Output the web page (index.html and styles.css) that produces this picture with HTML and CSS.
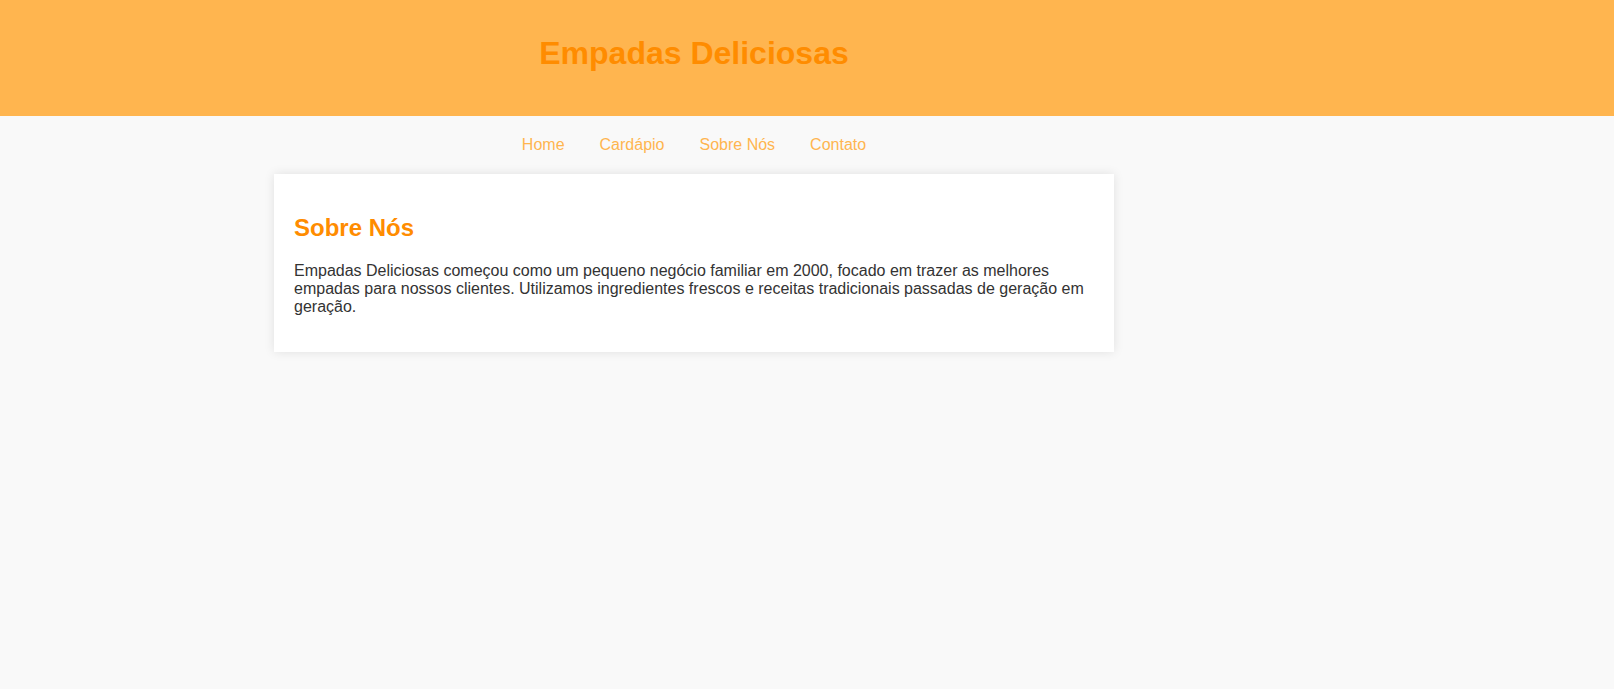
FILE: index.html
```html
<!DOCTYPE html>
<html lang="pt-BR">
<head>
<meta charset="utf-8">
<title>Empadas Deliciosas</title>
<link rel="stylesheet" href="styles.css">
</head>
<body>
<header class="site-header">
  <div class="container">
    <h1 class="site-title">Empadas Deliciosas</h1>
  </div>
</header>
<nav class="site-nav">
  <div class="container nav-links">
    <a href="#">Home</a>
    <a href="#">Cardápio</a>
    <a href="#">Sobre Nós</a>
    <a href="#">Contato</a>
  </div>
</nav>
<main class="container">
  <section class="card">
    <h2 class="card-title">Sobre Nós</h2>
    <p class="card-text">Empadas Deliciosas começou como um pequeno negócio familiar em 2000, focado em trazer as melhores empadas para nossos clientes. Utilizamos ingredientes frescos e receitas tradicionais passadas de geração em geração.</p>
  </section>
</main>
</body>
</html>
```
FILE: styles.css
```css
html, body {
  margin: 0;
  padding: 0;
}
body {
  background: #f9f9f9;
  font-family: "Liberation Sans", Arial, sans-serif;
  color: #333;
  min-height: 689px;
}
.container {
  width: 840px;
  margin-left: 274px;
  box-sizing: border-box;
}
.site-header {
  background: #ffb54f;
  height: 116px;
  box-sizing: border-box;
  padding-top: 14px;
}
.site-title {
  margin: 21.44px 0;
  font-size: 32px;
  font-weight: bold;
  color: #ff8c00;
  text-align: center;
}
.site-nav {
  padding: 20px 0;
}
.nav-links {
  display: flex;
  justify-content: center;
  gap: 35px;
  line-height: 18px;
}
.nav-links a {
  color: #ffb54f;
  text-decoration: none;
  font-size: 16px;
}
.card {
  background: #fff;
  padding: 20px;
  box-shadow: 0 0 10px rgba(0, 0, 0, 0.1);
}
.card-title {
  margin: 19.92px 0;
  font-size: 24px;
  font-weight: bold;
  color: #ff8c00;
}
.card-text {
  margin: 16px 0;
  font-size: 16px;
  color: #333;
}
```
